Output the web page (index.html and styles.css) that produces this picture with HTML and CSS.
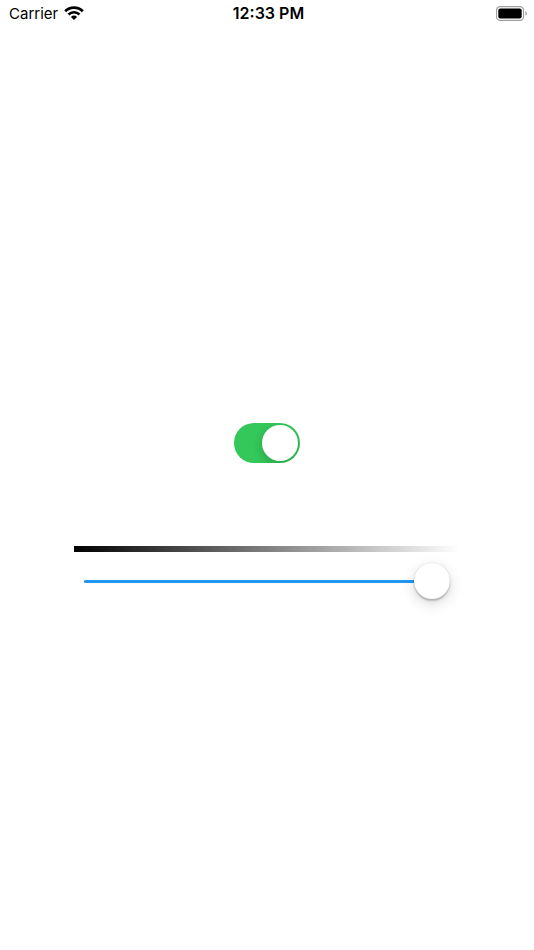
FILE: index.html
```
<!DOCTYPE html>
<html lang="en">
	<head>
		<meta charset="UTF-8">
		<meta name="viewport" content="width=device-width, initial-scale=1.0">
		<title>Switch and slider</title>
		<link rel="stylesheet" href="styles.css">
	</head>
	<body>
		<header class="status-bar">
			<div class="carrier">
				<span>Carrier</span>
				<svg class="wifi" viewBox="0 0 20 14" width="20" height="14" aria-hidden="true">
					<path d="M1.2 5.2A12.6 12.6 0 0 1 18.8 5.2" fill="none" stroke="#000" stroke-width="2.9"/>
					<path d="M4.5 8.5A7.9 7.9 0 0 1 15.5 8.5" fill="none" stroke="#000" stroke-width="2.6"/>
					<path d="M10 14L6.9 10.9A4.4 4.4 0 0 1 13.1 10.9Z"/>
				</svg>
			</div>
			<time class="time">12:33 PM</time>
			<svg class="battery" viewBox="0 0 32 15" width="32" height="15" aria-hidden="true">
				<rect x="0.5" y="0.7" width="27" height="13.6" rx="3.6" fill="none" stroke="#a0a0a0" stroke-width="1.2"/>
				<rect x="2.3" y="2.5" width="23.4" height="10" rx="2"/>
				<path d="M29.3 5.2Q31 6 31 7.5T29.3 9.8Z" fill="#a0a0a0"/>
			</svg>
		</header>
		<main class="controls">
			<input type="checkbox" role="switch" class="switch" aria-label="Enabled" checked>
			<div class="gradient"></div>
			<input type="range" class="slider" aria-label="Brightness" min="0" max="100" value="100">
		</main>
	</body>
</html>
```

FILE: styles.css
```
*{
	box-sizing:border-box;
}

body{
	margin:0;
	min-height:100vh;
	display:flex;
	flex-direction:column;
	background:#fff;
	color:#000;
	font-family:Inter,"Liberation Sans",sans-serif;
	font-size:15px;
}

/* status bar */
.status-bar{
	display:grid;
	grid-template-columns:1fr auto 1fr;
	align-items:center;
	height:26px;
	padding:0 6px 0 9px;
}

.carrier{
	display:flex;
	align-items:center;
	gap:6px;
}

.time{
	font-size:16px;
	font-weight:600;
}

.battery{
	justify-self:end;
}

/* switch and slider */
.controls{
	flex:1;
	display:flex;
	flex-direction:column;
	justify-content:center;
	padding:46px 74px 0;
}

.switch{
	appearance:none;
	align-self:center;
	width:66px;
	height:40px;
	margin:0;
	padding:2px;
	border-radius:20px;
	background:#e9e9eb;
	overflow:hidden;
	cursor:pointer;
}

.switch::before{
	content:"";
	display:block;
	width:36px;
	height:36px;
	border-radius:50%;
	background:#fff;
	box-shadow:0 3px 10px rgba(0,0,0,0.2);
}

.switch:checked{
	background:#34c759;
}

.switch:checked::before{
	margin-left:auto;
}

.gradient{
	height:6px;
	margin:83px 0 11px;
	background:linear-gradient(to right,#000,#fff);
}

.slider{
	appearance:none;
	height:36px;
	margin:0 10px;
	background:transparent;
	cursor:pointer;
}

.slider::-webkit-slider-runnable-track{
	height:3px;
	border-radius:2px;
	background:#2196f3;
}

.slider::-webkit-slider-thumb{
	appearance:none;
	width:36px;
	height:36px;
	margin-top:-17px;
	border-radius:50%;
	background:#fff;
	box-shadow:0 0 1px rgba(0,0,0,0.2),0 2px 2px rgba(0,0,0,0.22),0 4px 14px rgba(0,0,0,0.16);
}
```
